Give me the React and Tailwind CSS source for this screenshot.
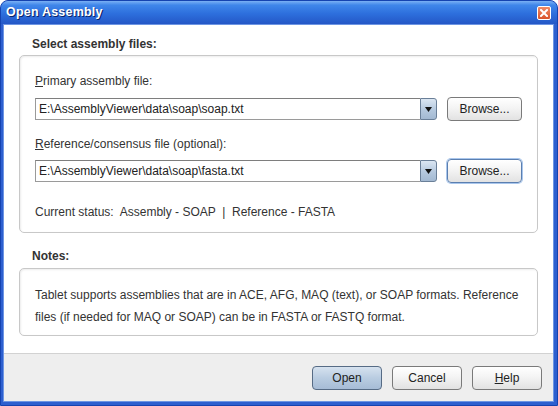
const ui = { fontFamily: '"Liberation Sans", Arial, sans-serif' };

function ComboRow({ value, focused }) {
  return (
    <div className="flex h-[24px] items-center gap-[10px]">
      <div className="flex h-[22px] flex-1 items-stretch">
        <div className="flex flex-1 items-center border border-r-0 border-[#9a9a9a] border-t-[#7e7e7e] bg-white pl-[3px] text-[12px] text-[#222]">
          {value}
        </div>
        <div className="flex w-[17px] items-center justify-center rounded-r-[3px] border border-[#6a7f98] bg-[linear-gradient(to_bottom,#dbe6f2,#b4c8de_55%,#a3b9d2)]">
          <svg width="7" height="5" viewBox="0 0 7 5">
            <path d="M0 0h7L3.5 5z" fill="#111" />
          </svg>
        </div>
      </div>
      <button
        className={`flex h-[24px] w-[75px] items-center justify-center rounded-[4px] border bg-[linear-gradient(to_bottom,#ffffff,#f4f4f4_45%,#e2e2e2)] text-[12px] text-[#222] ${
          focused ? "border-[#5b7fb0] shadow-[0_0_0_1px_#a9c6ec]" : "border-[#7a7a7a]"
        }`}
      >
        Browse...
      </button>
    </div>
  );
}

function FooterButton({ children, primary }) {
  return (
    <button
      className={`flex h-[24px] w-[70px] items-center justify-center rounded-[4px] border text-[12px] text-[#222] ${
        primary
          ? "border-[#566b85] bg-[linear-gradient(to_bottom,#d6e2ef,#b9cce1_50%,#a6bcd6)]"
          : "border-[#7a7a7a] bg-[linear-gradient(to_bottom,#ffffff,#f4f4f4_45%,#e2e2e2)]"
      }`}
    >
      {children}
    </button>
  );
}

export default function App() {
  return (
    <div className="h-[406px] w-[558px] bg-white" style={ui}>
      <div className="flex h-full w-full flex-col overflow-hidden rounded-t-[8px] border border-[#1543b0] bg-[#2d5fcf]">
        <div className="flex h-[23px] shrink-0 items-center justify-between bg-[linear-gradient(to_bottom,#7ab0f4,#3f86ea_18%,#2d6fdd_55%,#2457c6)] pl-[5px] pr-[6px]">
          <span className="text-[12.5px] font-bold tracking-[0.2px] text-white [text-shadow:1px_1px_0_#0a246a]">
            Open Assembly
          </span>
          <div className="flex h-[14px] w-[14px] items-center justify-center rounded-[2px] border border-white bg-[linear-gradient(to_bottom,#f08a66,#d9532b)]">
            <svg width="8" height="8" viewBox="0 0 8 8">
              <path d="M1 1l6 6M7 1l-6 6" stroke="#fff" strokeWidth="2" strokeLinecap="square" />
            </svg>
          </div>
        </div>

        <div className="mb-[3px] ml-[2px] mr-[3px] flex flex-1 flex-col border border-[#6d95e3]">
          <div className="flex flex-1 flex-col bg-white pl-[15px] pr-[15px] pt-[12px] text-[12px] leading-[15px] text-[#333]">
            <div className="ml-[13px] font-bold">Select assembly files:</div>
            <div className="mt-[3px] rounded-[5px] border border-[#c8c8c8] px-[15px] pb-[12px] pt-[18px] shadow-[inset_1px_1px_2px_rgba(0,0,0,0.08)]">
              <div>
                <span className="underline">P</span>rimary assembly file:
              </div>
              <div className="mt-[8px]">
                <ComboRow value="E:\AssemblyViewer\data\soap\soap.txt" />
              </div>
              <div className="mt-[16px]">
                <span className="underline">R</span>eference/consensus file (optional):
              </div>
              <div className="mt-[7px]">
                <ComboRow value="E:\AssemblyViewer\data\soap\fasta.txt" focused />
              </div>
              <div className="mt-[22px] whitespace-pre">
                {"Current status:  Assembly - SOAP  |  Reference - FASTA"}
              </div>
            </div>

            <div className="ml-[13px] mt-[16px] font-bold">Notes:</div>
            <div className="mt-[4px] rounded-[5px] border border-[#c8c8c8] px-[15px] pb-[7px] pt-[15px] leading-[22px] shadow-[inset_1px_1px_2px_rgba(0,0,0,0.08)]">
              Tablet supports assemblies that are in ACE, AFG, MAQ (text), or SOAP formats. Reference files (if needed for MAQ or SOAP) can be in FASTA or FASTQ format.
            </div>
          </div>

          <div className="flex h-[48px] shrink-0 items-start justify-end gap-[10px] border-t border-[#d2d2d2] bg-[#eeeeee] pr-[11px] pt-[12px]">
            <FooterButton primary>Open</FooterButton>
            <FooterButton>Cancel</FooterButton>
            <FooterButton>
              <span className="underline">H</span>elp
            </FooterButton>
          </div>
        </div>
      </div>
    </div>
  );
}
